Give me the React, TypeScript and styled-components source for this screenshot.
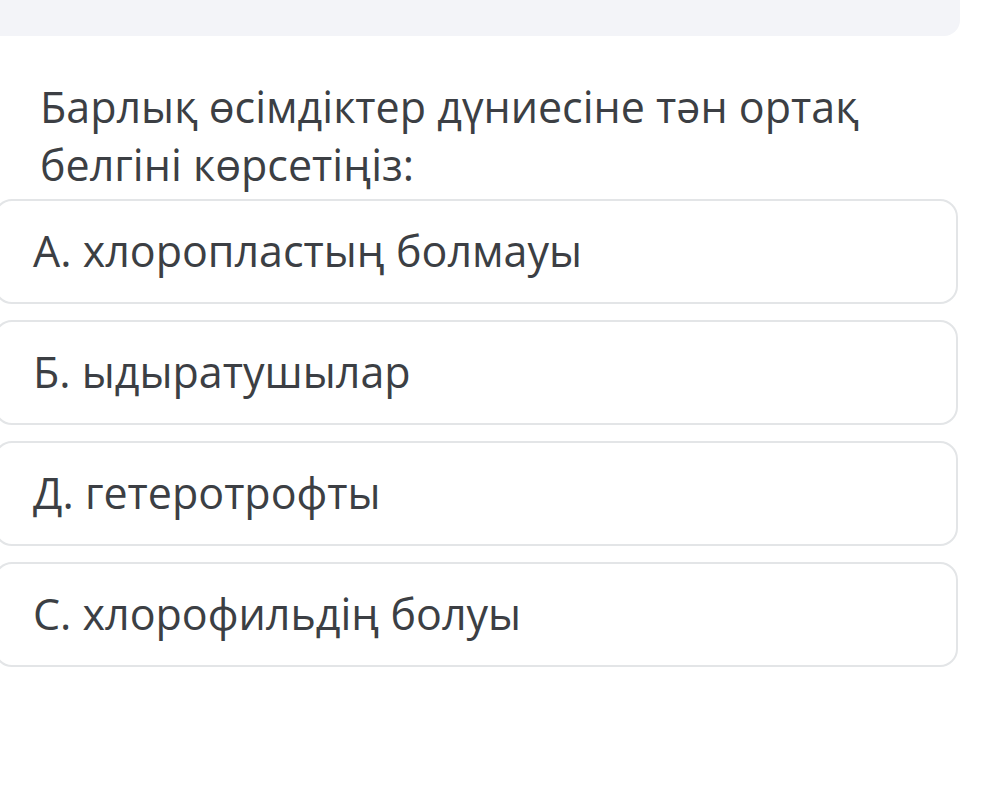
import React from "react";
import styled, { createGlobalStyle } from "styled-components";

const Global = createGlobalStyle`
  html, body { margin: 0; padding: 0; background: #ffffff; }
  body { font-family: "Open Sans", "Noto Sans", sans-serif; color: #3c3f44; overflow: hidden; }
`;

const Page = styled.div`
  width: 1002px;
  height: 798px;
  display: flex;
  flex-direction: column;
`;

const TopBar = styled.div`
  width: 960px;
  height: 36px;
  background: #f3f4f8;
  border-radius: 0 0 16px 0;
  flex: none;
`;

const Question = styled.div`
  margin: 42px 0 0 40px;
  font-size: 43px;
  line-height: 58px;
  color: #3c3f44;
  width: 910px;
`;

const Options = styled.div`
  margin: 5px 0 0 -6px;
  width: 964px;
  display: flex;
  flex-direction: column;
  gap: 16px;
`;

const Option = styled.div`
  box-sizing: border-box;
  height: 105px;
  border: 2px solid #e3e5e7;
  border-radius: 18px;
  display: flex;
  align-items: center;
  padding: 0 0 0 37px;
  font-size: 43px;
  line-height: 1.36;
  color: #3c3f44;
`;

const options = [
  "А. хлоропластың болмауы",
  "Б. ыдыратушылар",
  "Д. гетеротрофты",
  "С. хлорофильдің болуы",
];

export default function App() {
  return (
    <Page>
      <Global />
      <TopBar />
      <Question>Барлық өсімдіктер дүниесіне тән ортақ белгіні көрсетіңіз:</Question>
      <Options>
        {options.map((o) => (
          <Option key={o}>{o}</Option>
        ))}
      </Options>
    </Page>
  );
}
